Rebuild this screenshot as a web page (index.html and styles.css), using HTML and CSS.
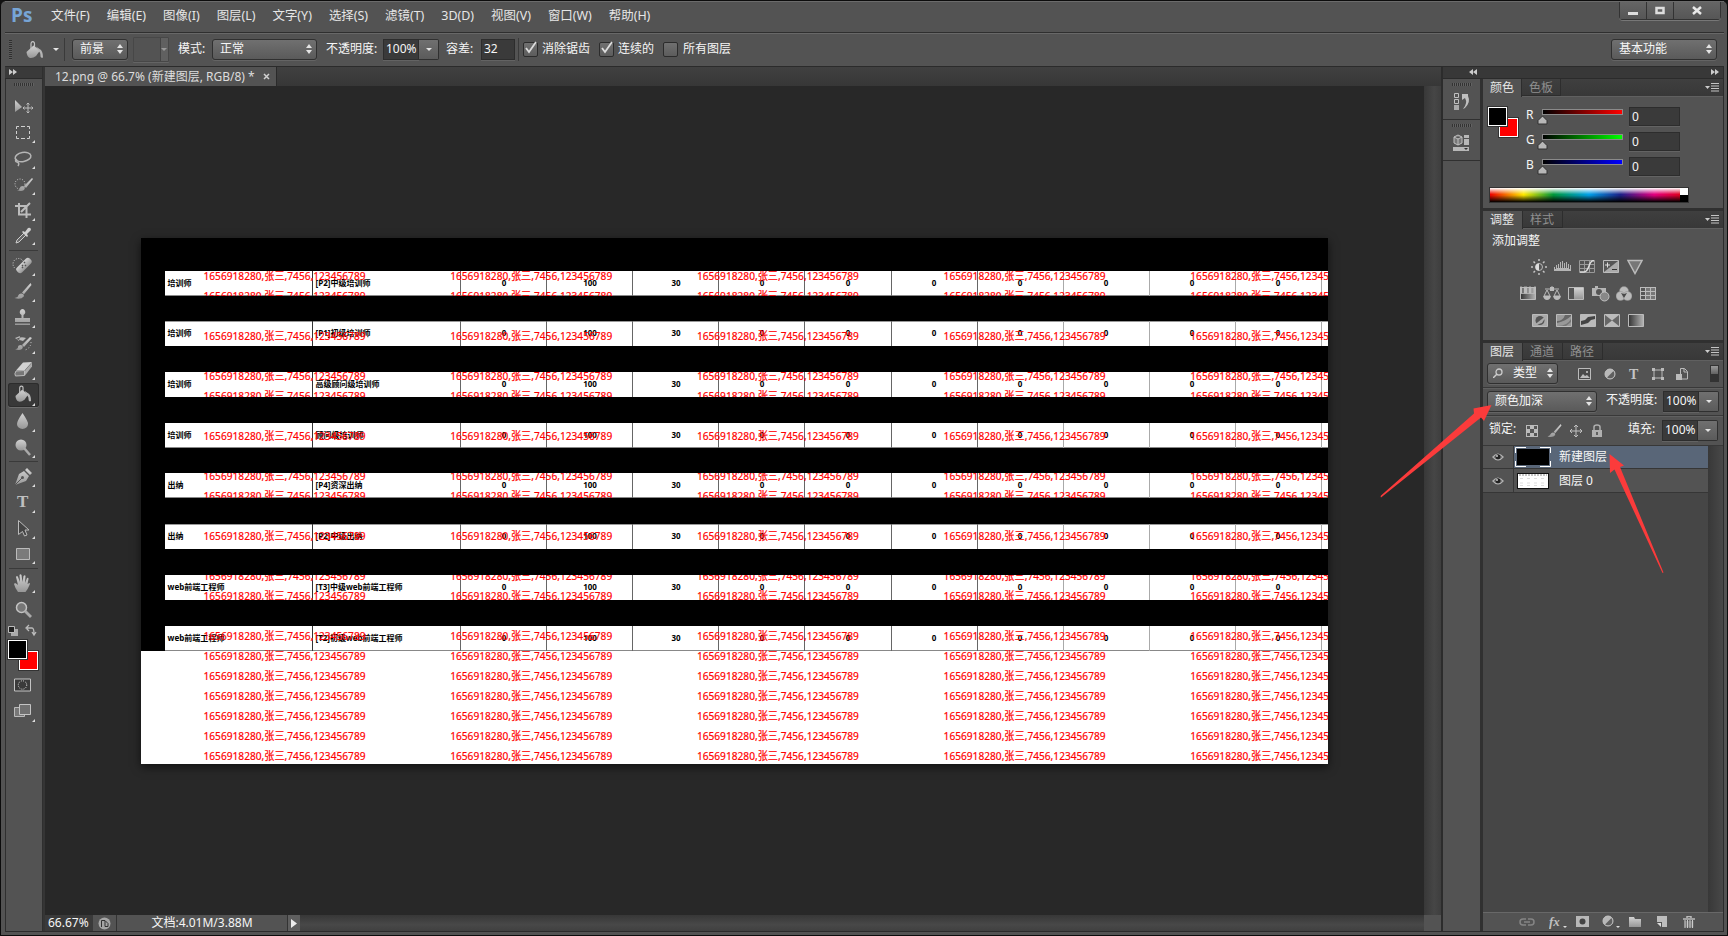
FILE: index.html
```html
<!DOCTYPE html>
<html lang="zh-CN">
<head>
<meta charset="utf-8">
<title>12.png</title>
<link rel="stylesheet" href="styles.css">
</head>
<body>
<svg class="defs" width="0" height="0">
  <defs>
    <linearGradient id="metal" x1="0" y1="0" x2="0" y2="1"><stop offset="0" stop-color="#d2d2d2"/><stop offset="1" stop-color="#979797"/></linearGradient>
    <linearGradient id="fade"><stop offset="0" stop-color="#333"/><stop offset="1" stop-color="#b5b5b5"/></linearGradient>
    <symbol id="bucket" viewBox="0 0 18 18"><path d="M.5 11 7.500 4.500 14 9.500 10 15q-3 2.500-6 2-3-1-3.500-6z" fill="url(#metal)"/><path d="M5 8V3q0-2.300 1.800-2.300T8.500 3v5" fill="none" stroke="#c4c4c4" stroke-width="1.200"/><path d="m10 5.500 3.500 2.500q3.500 1.500 3.500 8.500-2 .8-2.500-1 0-4-1.500-5z" fill="#b4b4b4"/></symbol>
    <symbol id="brush" viewBox="0 0 18 18"><path d="M17 0 8 10l2 2 8-10zM7 11q3 0 3 3-3 4-10 2 4-1 4-3 1-2 3-2z" fill="url(#metal)"/></symbol>
    <symbol id="updown" viewBox="0 0 6 10"><path d="M0 4 3 0l3 4zM0 6h6l-3 4z" fill="#e4e4e4"/></symbol>
    <symbol id="pmenu" viewBox="0 0 14 9"><path d="M0 3h5l-2.500 3z" fill="#ccc"/><path d="M6 .5h8M6 3h8M6 5.500h8M6 8h8" stroke="#c4c4c4"/></symbol>
    <symbol id="half" viewBox="0 0 12 12"><circle cx="6" cy="6" r="5" fill="#b8b8b8"/><path d="M3 9.500 9.500 3A4.500 4.500 0 0 1 3 9.500z" fill="#606060"/><circle cx="6" cy="6" r="5" fill="none" stroke="#c4c4c4"/></symbol>
    <symbol id="eye" viewBox="0 0 12 10"><path d="M0 5q6-7 12 0-6 7-12 0z" fill="#b9b9b9"/><path d="M1.500 5q4-5 9 0-4.500 5-9 0z" fill="#777"/><circle cx="6" cy="4.800" r="2.500" fill="#222"/><circle cx="5" cy="4" r=".9" fill="#ddd"/></symbol>
  </defs>
</svg>
<div class="window">
  <header class="menubar">
    <div class="logo">Ps</div>
    <nav class="menus"><span>文件(F)</span><span>编辑(E)</span><span>图像(I)</span><span>图层(L)</span><span>文字(Y)</span><span>选择(S)</span><span>滤镜(T)</span><span>3D(D)</span><span>视图(V)</span><span>窗口(W)</span><span>帮助(H)</span></nav>
    <div class="winbtns">
      <span class="wb min"><svg width="12" height="12"><path d="M1 7h10v3H1z" fill="#ddd"/></svg></span>
      <span class="wb max"><svg width="12" height="12"><path d="M2.500 3h7v5h-7z" fill="none" stroke="#ddd" stroke-width="2.500"/></svg></span>
      <span class="wb close"><svg width="12" height="12"><path d="m2 2 8 7M10 2 2 9" stroke="#e8e8e8" stroke-width="2.500"/></svg></span>
    </div>
  </header>
  <section class="options">
    <i class="vgrip"></i>
    <svg class="optbucket" width="18" height="18"><use href="#bucket"/></svg>
    <i class="caret"></i><i class="vsep"></i>
    <div class="select w-src">前景<svg width="6" height="10"><use href="#updown"/></svg></div>
    <div class="select off"><i class="caret"></i></div>
    <label class="l-mode">模式:</label>
    <div class="select w-mode">正常<svg width="6" height="10"><use href="#updown"/></svg></div>
    <label class="l-op">不透明度:</label>
    <div class="num">100%</div><div class="drop"><i class="caret"></i></div>
    <label class="l-tol">容差:</label>
    <div class="num tol">32</div>
    <i class="vsep2"></i>
    <span class="check"><svg width="15" height="14"><path d="m3 7 3 4 7-10" fill="none" stroke="#ddd" stroke-width="1.800"/></svg></span><label class="c1">消除锯齿</label>
    <span class="check"><svg width="15" height="14"><path d="m3 7 3 4 7-10" fill="none" stroke="#ddd" stroke-width="1.800"/></svg></span><label class="c2">连续的</label>
    <span class="check"></span><label class="c3">所有图层</label>
    <div class="select w-space">基本功能<svg width="6" height="10"><use href="#updown"/></svg></div>
  </section>
  <main class="main">
    <aside class="tools">
      <div class="toolhead"><svg width="8" height="6"><path d="m0 0 4 3-4 3zM4 0l4 3-4 3z" fill="#ccc"/></svg></div>
      <i class="hgrip"></i>
      <svg class="tool" width="38" height="26"><path d="m10 7 7 7-7 5z" fill="url(#metal)"/><path d="M18 15h10M23 10v10m-1.500-8.500L23 10l1.500 1.500m-3 7L23 20l1.500-1.500M19.500 13.500 18 15l1.500 1.500m7-3L28 15l-1.500 1.500" fill="none" stroke="#bbb"/></svg>
      <svg class="tool" width="38" height="26"><path d="M11.500 10V7.500H14m2 0h4m2 0h2.500V10m0 2v3m0 2v2.500H22m-2 0h-4m-2 0h-2.500V17m0-2v-3" fill="none" stroke="#d0d0d0"/><path class="more" d="M30 21v3h-3z"/></svg>
      <svg class="tool" width="38" height="26"><ellipse cx="18" cy="12" rx="8" ry="4.500" fill="none" stroke="#b5b5b5" stroke-width="1.500" transform="rotate(-10 18 12)"/><path d="M12 14q-3 2 0 3t1 4" fill="none" stroke="#b5b5b5" stroke-width="1.500"/><path class="more" d="M30 21v3h-3z"/></svg>
      <svg class="tool" width="38" height="26"><circle cx="15" cy="13" r="5" fill="none" stroke="#d0d0d0" stroke-dasharray="1 1.500"/><path d="m27 7-8 8 2 2 7-9zm-9 8q3 1 1 4-3 2-7 0 3 0 3-2t3-2z" fill="url(#metal)"/><path class="more" d="M30 21v3h-3z"/></svg>
      <svg class="tool" width="38" height="26"><path d="M10 9h11.500v12M14 6v11.500h12M16 15l9-9" fill="none" stroke="#bcbcbc" stroke-width="2"/><path class="more" d="M30 21v3h-3z"/></svg>
      <svg class="tool" width="38" height="26"><path d="m11 20 1-3 7-7 2 2-7 7z" fill="#666" stroke="#ccc"/><path d="m17 9 1-1 2 1 3-4q3-1 3 2l-4 4 1 2-1 1z" fill="#cfcfcf"/><path class="more" d="M30 19v3h-3z"/></svg>
      <i class="toolsep"></i>
      <svg class="tool" width="38" height="26"><circle cx="13.500" cy="12" r="5.500" fill="none" stroke="#d0d0d0" stroke-dasharray="1 1.500"/><rect x="10" y="10" width="18" height="7" rx="3" transform="rotate(-45 19 13.500)" fill="url(#metal)"/><path d="m17 13 1 1m1-4 1 1m0 2 1 1m-4 1 1 1" stroke="#555" stroke-width="1.500"/><path class="more" d="M30 21v3h-3z"/></svg>
      <svg class="tool" width="38" height="26"><svg x="9" y="5" width="18" height="17"><use href="#brush"/></svg><path class="more" d="M30 21v3h-3z"/></svg>
      <svg class="tool" width="38" height="26"><path d="M16.500 14v-3q-3-2-1-5 2-2 4 0 2 3-1 5v3h6.500v4H10v-4zM10 19.500h15V21H10z" fill="url(#metal)"/><path class="more" d="M30 21v3h-3z"/></svg>
      <svg class="tool" width="38" height="26"><path d="m25 7-8 8 2 2 8-9zm-9 8q3 1 1 4-3 2-7 0 3 0 3-2t3-2z" fill="url(#metal)"/><path d="M11 9q5-3 10-1l-3 3m-8-3 4 3 1-5z" fill="#bbb"/><path d="M26 12q0 6-6 8" fill="none" stroke="#ccc" stroke-dasharray="1 2"/><path class="more" d="M30 21v3h-3z"/></svg>
      <svg class="tool" width="38" height="26"><path d="m11 14.500 7-8 9-.5-7 8z" fill="#d2d2d2"/><path d="m20 14.500 7-8v4l-7 9z" fill="#aaa"/><path d="m11 15 8.500-.5v5l-9 .5q-1.500-2 .5-5z" fill="#777" stroke="#bbb"/><path class="more" d="M30 21v3h-3z"/></svg>
      <svg class="tool selected" width="38" height="26"><svg x="10" y="3" width="17" height="18"><use href="#bucket"/></svg><path class="more" d="M30 21v3h-3z"/></svg>
      <svg class="tool" width="38" height="26"><path d="M17.500 5q6 9 5.500 11a5.500 5 0 0 1-11 0q0-3 5.500-11z" fill="url(#metal)"/><path class="more" d="M30 21v3h-3z"/></svg>
      <svg class="tool" width="38" height="26"><circle cx="16" cy="11" r="5.500" fill="url(#metal)"/><path d="m19 14 6 7" stroke="#aaa" stroke-width="2.500"/><path class="more" d="M30 21v3h-3z"/></svg>
      <i class="toolsep"></i>
      <svg class="tool" width="38" height="26"><path d="m10 22 4-11 5-3 5 5-3 5zM20 7l2-2 5 5-2 2z" fill="url(#metal)"/><path d="m10 22 7-7" stroke="#555"/><circle cx="17.500" cy="14.500" r="1.500" fill="#555"/><path class="more" d="M30 21v3h-3z"/></svg>
      <svg class="tool" width="38" height="26"><text class="ttool" x="12" y="18">T</text><path class="more" d="M30 21v3h-3z"/></svg>
      <svg class="tool" width="38" height="26"><path d="M13.500 5.500v14l4-3 2 4.500 2.500-1-2-5h4z" fill="#444" stroke="#bbb"/><path class="more" d="M30 21v3h-3z"/></svg>
      <svg class="tool" width="38" height="26"><path d="M11.500 7.500h13v11h-13z" fill="#7b7b7b" stroke="#bbb"/><path class="more" d="M30 20v3h-3z"/></svg>
      <i class="toolsep"></i>
      <svg class="tool" width="38" height="26"><path d="M13 22q-3-4-4-8l1-1q2 1 3 2l-2-8q1-2 2 0l2 5-.500-7q1-1.500 2 0l1 7 1-6q1.500-1.500 2 0l-.500 7 2-5q1.500-1 1.500 1l-1 5 2-1q1 0 0 2-2 5-4 7z" fill="url(#metal)"/><path class="more" d="M30 20v3h-3z"/></svg>
      <svg class="tool" width="38" height="26"><circle cx="16.500" cy="11.500" r="5" fill="#777" stroke="#c4c4c4" stroke-width="1.500"/><path d="m20 15 6 6" stroke="#aaa" stroke-width="2.800"/></svg>
      <svg class="mini" width="38" height="17"><path d="M6 7h7v7H6z" fill="#aaa"/><path d="M3.500 4.500h6v6h-6z" fill="#222" stroke="#bbb"/><path d="M22 6h5q2 0 2 6m-2-2 2 3 2-3M24 3l-3 3 3 3" fill="none" stroke="#bbb" stroke-width="1.300"/></svg>
      <div class="swatches"><b class="bg"></b><b class="fg"></b></div>
      <svg class="tool" width="38" height="26"><path d="M9.500 7h16v12h-16z" fill="#3a3a3a" stroke="#c4c4c4"/><circle cx="17.500" cy="13" r="4.200" fill="none" stroke="#ddd" stroke-dasharray="1 1.200"/></svg>
      <svg class="tool" width="38" height="26"><path d="M9.500 9.500h10v9h-10z" fill="#777" stroke="#bbb"/><path d="M14.500 6.500h11v10h-11z" fill="#707070" stroke="#c4c4c4"/><path class="more" d="M30 21v3h-3z"/></svg>
    </aside>
    <section class="doc">
      <div class="tabs"><div class="tab"><span>12.png @ 66.7% (新建图层, RGB/8) *</span><svg width="7" height="7"><path d="m1 1 5 5M6 1 1 6" stroke="#d0d0d0" stroke-width="1.500"/></svg></div></div>
      <div class="work">
        <div class="canvas"><svg id="picture" class="picture" width="1187" height="526" viewBox="141 238 1187 526"></svg></div>
        <i class="vscroll"></i>
      </div>
      <footer class="status">
        <span class="zoom">66.67%</span>
        <span class="sicon"><svg width="13" height="13"><circle cx="6.500" cy="6.500" r="6" fill="#a6a6a6"/><path d="M3.500 10V3.500H7L10 6.500V9.500H7V4" fill="none" stroke="#333"/></svg></span>
        <span class="size">文档:4.01M/3.88M</span>
        <span class="play"><svg width="7" height="9"><path d="m0 0 6 4.500L0 9z" fill="#eee"/></svg></span>
        <i class="hscroll"></i><i class="corner"></i>
      </footer>
    </section>
    <section class="right">
      <div class="righthead"><svg width="8" height="6"><path d="M4 0 0 3l4 3zM8 0 4 3l4 3z" fill="#ccc"/></svg><svg width="8" height="6"><path d="m0 0 4 3-4 3zM4 0l4 3-4 3z" fill="#ccc"/></svg></div>
      <div class="rightbody">
        <div class="dock">
          <div class="dockitem"><i class="hgrip"></i><svg width="18" height="20"><path d="M1.500 1.500h4v4h-4zm0 6h4v4h-4z" fill="none" stroke="#c0c0c0"/><path d="M1 13h5v5H1z" fill="#aaa"/><path d="M9 2h6v2q3 6-3 12l-2 1q5-6 2-11l-3 2z" fill="#c0c0c0"/></svg></div>
          <div class="dockitem"><i class="hgrip"></i><svg width="18" height="20"><path d="m5 2 4 2v6l-4 2-4-2V4zM1 4l4 2 4-2M5 6v6" fill="#777" stroke="#c0c0c0"/><path d="M11 2h5v3h-5zm0 4h5v6h-5zM0 14h16v4H0z" fill="#b8b8b8"/><path d="M11 15h4l-2 2z" fill="#333"/></svg></div>
        </div>
        <div class="panels">
          <div class="ptabs first"><span class="on">颜色</span><span>色板</span><svg width="14" height="9"><use href="#pmenu"/></svg></div>
          <div class="color">
            <div class="colorrow">
              <div class="swatches big"><b class="bg"></b><b class="fg"></b></div>
              <div class="sliders">
                <div class="slider"><span>R</span><div class="track red"><svg width="11" height="9"><path d="M5.500 0 10 4.500V8H1V4.500z" fill="#b8b8b8" stroke="#333"/></svg></div><div class="num">0</div></div>
                <div class="slider"><span>G</span><div class="track green"><svg width="11" height="9"><path d="M5.500 0 10 4.500V8H1V4.500z" fill="#b8b8b8" stroke="#333"/></svg></div><div class="num">0</div></div>
                <div class="slider"><span>B</span><div class="track blue"><svg width="11" height="9"><path d="M5.500 0 10 4.500V8H1V4.500z" fill="#b8b8b8" stroke="#333"/></svg></div><div class="num">0</div></div>
              </div>
            </div>
            <div class="spectrum"><i></i><b></b></div>
          </div>
          <div class="ptabs"><span class="on">调整</span><span>样式</span><svg width="14" height="9"><use href="#pmenu"/></svg></div>
          <div class="adjust">
            <p>添加调整</p>
            <div class="adjrow one">
              <svg width="16" height="16"><circle cx="8" cy="8" r="3.500" fill="#555" stroke="#bbb"/><path d="M8 4.500a3.500 3.500 0 0 0 0 7z" fill="#ddd"/><path d="M8 0v2m0 12v2M0 8h2m12 0h2M2.500 2.500l1.500 1.500m8 8 1.500 1.500m0-11L12 4m-8 8-1.500 1.500" stroke="#c4c4c4" stroke-width="1.500"/></svg>
              <svg width="18" height="16"><path d="M0 12V8h1v2h1V6h1v3h1V5h1v4h1V3h1v6h1V2h1v7h1V4h1v5h1V3h1v6h1V5h1v5h1V6h1v6z" fill="#b5b5b5"/></svg>
              <svg width="16" height="16"><path d="M.5 1.500h15v12H.5zM0 5.500h16M0 9.500h16M5.500 1v12M10.500 1v12" fill="none" stroke="#999"/><path d="M1 13h4q3 0 5-6t5-5" fill="none" stroke="#ddd" stroke-width="1.500"/></svg>
              <svg width="16" height="16"><path d="M.5 1.500h15v12H.5z" fill="#aaa" stroke="#bbb"/><path d="M1 2h14L1 13z" fill="#555"/><path d="M2 6h5M4.500 3.500v5" stroke="#ddd"/><path d="M9 10.500h5" stroke="#333"/></svg>
              <svg width="16" height="16"><path d="M1 1.500h14L8 14.500z" fill="#777" stroke="#bbb" stroke-width="1.500"/></svg>
            </div>
            <div class="adjrow two">
              <svg width="16" height="16"><path d="M.5 1.500h15v12H.5z" fill="url(#fade)" stroke="#bbb"/><path d="M0 1h2v6H0zm4 0h3v6H4zm5 0h2v6H9zm5 0h2v6h-2zM0 7.500h16" fill="#bbb" stroke="#bbb" stroke-width=".8"/></svg>
              <svg width="18" height="16"><path d="M2 3h14M9 0v5M4 4l-3 6h6L4 4zm10 0-3 6h6l-3-6z" fill="none" stroke="#bbb"/><path d="M0 10h8q-1 4-4 4t-4-4zm10 0h8q-1 4-4 4t-4-4zM7 1h4v4H7z" fill="#bbb"/></svg>
              <svg width="16" height="16"><path d="M.5 1.500h15v12H.5z" fill="#555" stroke="#bbb"/><path d="M6 2h9v11H6z" fill="url(#metal)"/></svg>
              <svg width="18" height="16"><path d="M0 2h3V0h3v2h8v8H0z" fill="#b5b5b5"/><circle cx="7" cy="6" r="3" fill="#555"/><circle cx="12.500" cy="10.500" r="4.500" fill="#888" stroke="#c0c0c0"/></svg>
              <svg width="16" height="16"><g fill="#bbb" stroke="#888" stroke-width=".5"><circle cx="8" cy="5" r="4.500"/><circle cx="4.500" cy="10" r="4.500"/><circle cx="11.500" cy="10" r="4.500"/></g><path d="m5 7 3 1 3-1-3 5z" fill="#4a4a4a"/></svg>
              <svg width="16" height="16"><path d="M0 1h16v13H0z" fill="#bbb"/><path d="M1 2h4v3H1zm0 4h4v3H1zm0 4h4v3H1z" fill="#555"/><path d="M6 2h4v3H6zm5 0h4v3h-4zM6 6h4v3H6zm5 0h4v3h-4zm-5 4h4v3H6zm5 0h4v3h-4z" fill="#777"/></svg>
            </div>
            <div class="adjrow three">
              <svg width="16" height="16"><path d="M.5 1.500h15v12H.5z" fill="#aaa" stroke="#bbb"/><circle cx="8" cy="7.500" r="4.500" fill="#555"/><path d="M1 13 15 2l-5 8z" fill="#aaa"/></svg>
              <svg width="16" height="16"><path d="M.5 1.500h15v12H.5z" fill="#999" stroke="#bbb"/><path d="M1 8q6 0 8-6h6v1q-5 5-14 7z" fill="#666"/><path d="M2 13q9 0 13-7v3l-5 4z" fill="#777"/></svg>
              <svg width="16" height="16"><path d="M.5 1.500h15v12H.5z" fill="#bbb" stroke="#bbb"/><path d="m1 8 4-1 3-3 7-1v3l-4 1-3 3-7 2z" fill="#444"/></svg>
              <svg width="16" height="16"><path d="M.5 1.500h15v12H.5z" fill="#666" stroke="#bbb"/><path d="m1 2 7 5.500L15 2zm0 11 7-5.500 7 5.500z" fill="#bbb"/></svg>
              <svg width="16" height="16"><path d="M.5 1.500h15v12H.5z" fill="url(#fade)" stroke="#bbb"/></svg>
            </div>
          </div>
          <div class="ptabs"><span class="on">图层</span><span>通道</span><span>路径</span><svg width="14" height="9"><use href="#pmenu"/></svg></div>
          <div class="filter">
            <div class="select w-type"><svg class="mag" width="10" height="10"><circle cx="6" cy="4" r="3" fill="none" stroke="#ccc" stroke-width="1.300"/><path d="M4 6 0 10" stroke="#ccc" stroke-width="1.500"/></svg>类型<svg width="6" height="10"><use href="#updown"/></svg></div>
            <div class="ficons">
              <svg width="14" height="12"><path d="M.5.5h12v11H.5z" fill="#4a4a4a" stroke="#bbb"/><path d="m2 10 3-4 2 2 2-1 3 3z" fill="#bbb"/><circle cx="9" cy="4" r="1" fill="#ccc"/></svg>
              <svg width="12" height="12"><use href="#half"/></svg>
              <svg width="12" height="12"><text class="tfilter" x="1" y="11">T</text></svg>
              <svg width="12" height="12"><path d="M2 2h8v8H2z" fill="none" stroke="#bbb"/><path d="M0 0h3v3H0zm9 0h3v3H9zM0 9h3v3H0zm9 0h3v3H9z" fill="#bbb"/></svg>
              <svg width="12" height="12"><path d="M4.500 8V.5h4l3 3V11H6M8 1v3h3" fill="none" stroke="#bbb"/><path d="M0 6h6v6H0z" fill="#bbb"/></svg>
            </div>
            <i class="toggle"></i>
          </div>
          <div class="blend"><div class="select w-blend">颜色加深<svg width="6" height="10"><use href="#updown"/></svg></div><label>不透明度:</label><div class="num">100%</div><div class="drop"><i class="caret"></i></div></div>
          <div class="lock"><label>锁定:</label>
            <svg class="chk" width="12" height="12"><path d="M0 0h12v12H0z" fill="#bbb"/><path d="M1 1h3v3H1zm7 0h3v3H8zM4 4h4v4H4zM1 8h3v3H1zm7 0h3v3H8z" fill="#555"/></svg>
            <svg width="17" height="14"><use href="#brush"/></svg>
            <svg width="14" height="14"><path d="M1 7h12M7 1v12M5 3l2-2 2 2m-4 8 2 2 2-2M3 5 1 7l2 2m8-4 2 2-2 2" fill="none" stroke="#c0c0c0"/></svg>
            <svg width="12" height="13"><path d="M1 6h10v7H1z" fill="#b0b0b0"/><path d="M3 6V3q0-2 3-2t3 2v3" fill="none" stroke="#b0b0b0" stroke-width="1.500"/><path d="M6 8v3" stroke="#444" stroke-width="1.500"/></svg>
            <label class="fill">填充:</label><div class="num">100%</div><div class="drop"><i class="caret"></i></div></div>
          <div class="layers">
            <div class="list">
              <div class="layer sel"><span class="vis"><svg width="12" height="10"><use href="#eye"/></svg></span><span class="thumb black"><svg width="36" height="20"><path d="M.5 6V.5H11M25 .5h10.500V6m0 8v5.500H25m-14 0H.5V14" fill="none" stroke="#fff"/></svg></span><span>新建图层</span></div>
              <div class="layer"><span class="vis"><svg width="12" height="10"><use href="#eye"/></svg></span><span class="thumb white"><svg width="30" height="14"><path d="M1 1h28" stroke="#888" stroke-dasharray="2 1"/><path d="M2 4.500h26M2 9h26M2 11.500h26" stroke="#ddd" stroke-dasharray="3 4"/></svg></span><span>图层 0</span></div>
            </div>
            <i class="lscroll"></i>
          </div>
          <div class="lfoot">
            <svg width="16" height="12"><path d="M7 3H4a3 3 0 0 0 0 6h3M9 3h3a3 3 0 0 1 0 6H9M5 6h6" fill="none" stroke="#858585" stroke-width="1.500"/></svg>
            <svg width="18" height="14"><text class="fx" x="0" y="11">fx</text><path d="M14 11h4l-2 2z" fill="#ddd"/></svg>
            <svg width="14" height="12"><path d="M0 0h13v11H0z" fill="#b8b8b8"/><circle cx="6.500" cy="5.500" r="3" fill="#444"/></svg>
            <svg width="18" height="14"><svg width="12" height="12"><use href="#half"/></svg><path d="M14 11h4l-2 2z" fill="#ddd"/></svg>
            <svg width="13" height="12"><path d="M0 1h5l1 2h6v8H0z" fill="url(#metal)"/></svg>
            <svg width="12" height="12"><path d="M1 0h10v11H6V6H1z" fill="#bdbdbd"/><path d="M1 7h4v4z" fill="#ddd"/></svg>
            <svg width="12" height="12"><path d="M0 3h12M4 2V.500h4V2" fill="none" stroke="#bbb" stroke-width="1.500"/><path d="M1.500 5h9v6.500h-9z" fill="#777"/><path d="M2 4v8m2.500-8v8M7 4v8m2.500-8v8" stroke="#ccc"/></svg>
          </div>
        </div>
      </div>
    </section>
  </main>
</div>
<svg class="arrows" width="300" height="190" viewBox="1375 395 300 190"><path d="m1491.500 405-7.500 16-3-3.500-100 80q-.7-1 0-2l93-82-.5-5zM1609.500 454l14.500 11.500-4 1.500 43.500 105.500-1 .5-48-103.500-4.500 3.500z" fill="#fb3b3b"/></svg>
<script src="picture.js"></script>
</body>
</html>
```
FILE: styles.css
```css
* { box-sizing: border-box; }
body { margin: 0; background: #111; font: 12px/16px "Noto Sans", "Noto Sans CJK SC", sans-serif; color: #f6f6f6; overflow: hidden; }
svg { display: block; flex: none; }
i, b { display: block; flex: none; }
label, span { white-space: nowrap; }
.defs { position: absolute; }
.window { width: 1728px; height: 936px; border: 1px solid #0c0c0c; border-radius: 6px 6px 0 0; background: #535353; display: flex; flex-direction: column; padding: 0 3px 3px 4px; }

.menubar { height: 31px; display: flex; align-items: flex-start; border-top: 1px solid #6b6b6b; }
.logo { width: 46px; padding-left: 6px; font: bold 19px/26px "Open Sans", sans-serif; color: #77a5d6; }
.menus { display: flex; gap: 17px; padding-top: 6px; font-size: 12.45px; color: #e6e6e6; }
.winbtns { display: flex; margin-left: auto; margin-right: 3px; height: 18px; border: 1px solid #333; border-top: 0; border-radius: 0 0 4px 4px; box-shadow: 0 1px #777; }
.wb { display: flex; justify-content: center; align-items: center; background: linear-gradient(#656565, #565656); }
.min { width: 27px; border-right: 1px solid #333; }
.max { width: 27px; border-right: 1px solid #333; }
.close { width: 46px; }

.options { height: 34px; border-top: 1px solid #2f2f2f; box-shadow: inset 0 1px #686868; display: flex; align-items: center; padding: 1px 7px 1px 4px; }
.vgrip { width: 3px; height: 20px; background: repeating-linear-gradient(#2f2f2f 0 1px, #5c5c5c 1px 2px); }
.optbucket { margin: 0 9px 0 14px; }
.caret { width: 0; height: 0; border: 3px solid transparent; border-top-color: #e4e4e4; border-bottom: 0; }
.vsep { width: 1px; height: 23px; background: #3a3a3a; margin: 0 7px 0 5px; }
.select { height: 21px; flex: none; display: flex; align-items: center; justify-content: space-between; padding: 0 4px 1px 7px; border: 1px solid #303030; border-radius: 3px; background: linear-gradient(#707070, #5a5a5a); box-shadow: 0 1px #646464; white-space: nowrap; }
.w-src { width: 56px; }
.off { width: 36px; height: 25px; margin: 0 9px 0 5px; border-color: #474747; border-radius: 1px; background: linear-gradient(90deg, #535353 26px, #444 26px 27px, #606060 27px); justify-content: flex-end; padding-right: 1px; }
.off .caret { border-top-color: #999; }
.options label { margin-top: -2px; }
.options .l-mode { width: 34px; }
.w-mode { width: 105px; }
.options .l-op { width: 57px; margin-left: 9px; }
.num { width: 36px; height: 21px; flex: none; background: #3a3a3a; border: 1px solid #2d2d2d; box-shadow: 0 1px #636363; padding-left: 2px; line-height: 18px; }
.drop { width: 20px; height: 21px; flex: none; display: flex; align-items: center; justify-content: center; border: 1px solid #303030; border-left: 0; border-radius: 0 2px 2px 0; background: linear-gradient(#707070, #5b5b5b); }
.options .l-tol { width: 35px; margin-left: 7px; }
.tol { width: 34px; }
.vsep2 { width: 1px; height: 23px; background: #3a3a3a; margin: 0 4px 0 3px; }
.check { width: 15px; height: 15px; flex: none; border: 1px solid #2c2c2c; border-radius: 2px; background: linear-gradient(#707070, #5c5c5c); }
.check svg { margin: -2px 0 0 -1px; }
.c1 { width: 61px; padding-left: 4px; }
.c2 { width: 49px; padding-left: 4px; }
.c3 { padding-left: 5px; }
.w-space { width: 106px; margin-left: auto; }

.main { flex: 1; min-height: 0; display: flex; border: 1px solid #2b2b2b; border-left-color: #333; }
.tools { width: 38px; flex: none; display: flex; flex-direction: column; border-right: 1px solid #2f2f2f; margin-left: -1px; box-shadow: inset 1px 0 #2f2f2f; }
.toolhead { height: 12px; background: #3a3a3a; border-bottom: 1px solid #2b2b2b; padding: 2px 4px; margin-bottom: 4px; }
.hgrip { width: 20px; height: 3px; background: repeating-linear-gradient(90deg, #333 0 1px, #626262 1px 2px); }
.tools .hgrip { margin: 0 0 7px 9px; }
.tool { width: 37px; height: 26px; }
.more { fill: #ddd; }
.selected { background: #383838; border-radius: 3px; width: 31px; margin-left: 3px; height: 24px; margin-top: 1px; margin-bottom: 1px; box-shadow: 0 0 0 1px #2c2c2c inset, 0 1px #6c6c6c; }
.selected > * { transform: translate(-3px, -1px); }
.toolsep { width: 29px; height: 1px; margin: 1px 0 1px 4px; background: #3a3a3a; }
.ttool { font: bold 17px "Liberation Serif", serif; fill: #c0c0c0; }
.tfilter { font: bold 14px "Liberation Serif", serif; fill: #c4c4c4; }
.fx { font: italic bold 13px "Liberation Serif", serif; fill: #c0c0c0; }
.swatches { width: 30px; height: 30px; display: grid; margin: 1px 0 2px 3px; }
.swatches b { grid-area: 1 / 1; width: 19px; height: 19px; border: 1px solid #fff; outline: 1px solid #333; }
.fg { background: #000; margin: 0; }
.bg { background: #f00; align-self: end; justify-self: end; }

.doc { flex: 1; min-width: 0; display: flex; flex-direction: column; border-left: 2px solid #353535; }
.tabs { height: 19px; background: linear-gradient(#404040, #373737); display: flex; }
.tab { width: 232px; background: #535353; border-right: 1px solid #2a2a2a; display: flex; align-items: center; justify-content: space-between; padding: 0 6px 0 10px; color: #ddd; line-height: 20px; }
.tab span { font-size: 12px; padding-top: 1px; }
.work { flex: 1; min-height: 0; display: flex; background: #282828; }
.canvas { flex: 1; min-width: 0; padding: 152px 0 0 96px; }
.picture { background: #fff; box-shadow: 0 3px 9px #0009; }
.vscroll { width: 17px; background: linear-gradient(90deg, #383838, #464646 60%, #3e3e3e); }
.status { height: 16px; display: flex; line-height: 15px; background: #444; }
.zoom { width: 48px; padding-left: 3px; background: #3a3a3a; }
.sicon { width: 24px; background: #535353; border-right: 1px solid #333; display: flex; align-items: center; justify-content: center; }
.size { width: 171px; background: #535353; border-right: 1px solid #333; text-align: center; }
.play { width: 12px; background: #5f5f5f; display: flex; align-items: center; justify-content: center; }
.hscroll { flex: 1; background: linear-gradient(#373737, #484848 60%, #404040); }
.corner { width: 17px; background: #535353; }
.mark { font: 11px "Noto Sans", "Noto Sans CJK SC", sans-serif; fill: #f00; stroke: #f00; stroke-width: .2px; }
.cell { font: bold 8px "Noto Sans", "Noto Sans CJK SC", sans-serif; fill: #000; }
.mid { text-anchor: middle; }

.right { width: 282px; flex: none; display: flex; flex-direction: column; border-left: 2px solid #2c2c2c; }
.righthead { height: 12px; background: #383838; border-bottom: 1px solid #2b2b2b; display: flex; justify-content: space-between; padding: 2px 4px 0 26px; }
.rightbody { flex: 1; min-height: 0; display: flex; }
.dock { width: 40px; flex: none; border-right: 3px solid #303030; }
.dockitem { height: 41px; border-bottom: 1px solid #303030; display: flex; flex-direction: column; align-items: center; padding: 4px 0 0 1px; gap: 6px; }
.panels { width: 240px; flex: none; display: flex; flex-direction: column; }
.ptabs { height: 18px; flex: none; display: flex; background: linear-gradient(#3f3f3f, #383838); border-bottom: 1px solid #606060; }
.ptabs span { width: 40px; padding-left: 7px; border-right: 1px solid #2d2d2d; border-bottom: 1px solid #2d2d2d; color: #8f8f8f; line-height: 17px; }
.first span { width: 39px; }
.ptabs .on { background: #535353; color: #e6e6e6; height: 18px; border-bottom: 0; }
.ptabs svg { margin: 4px 4px 0 auto; }
.color { height: 114px; flex: none; border-bottom: 3px solid #303030; padding: 10px 0 0 6px; }
.colorrow { display: flex; height: 80px; }
.big { margin: 0 0 0 -1px; }
.sliders { display: flex; flex-direction: column; gap: 6px; margin-left: 8px; }
.slider { height: 19px; display: flex; }
.slider span { width: 16px; line-height: 15px; }
.track { width: 81px; height: 6px; border: 1px solid #8a8a8a; margin: 2px 6px 0 0; }
.track svg { margin: 6px 0 0 -6px; }
.red { background: linear-gradient(90deg, #000, #f00); }
.green { background: linear-gradient(90deg, #000, #0f0); }
.blue { background: linear-gradient(90deg, #000, #00f); }
.slider .num { width: 51px; height: 19px; }
.spectrum { width: 200px; height: 16px; border: 1px solid #333; display: grid; grid-template: 1fr 1fr / 1fr 8px; background: linear-gradient(#fff, #fff0 45%, #0000 50%, #000), linear-gradient(90deg, #e00, #ffe900 17%, #00983a 32%, #00a0e9 50%, #1d2088 66%, #e4007f 83%, #d00); }
.spectrum i { grid-area: 1 / 2; background: #fff; }
.spectrum b { grid-area: 2 / 2; background: #000; }
.adjust { height: 114px; flex: none; border-bottom: 3px solid #303030; padding-top: 4px; }
.adjust p { margin: 0 0 10px 9px; }
.adjrow { display: flex; margin-bottom: 11px; gap: 8px; }
.one { padding-left: 48px; }
.two { padding-left: 37px; }
.three { padding-left: 49px; }
.one svg:nth-child(2), .two svg:nth-child(2) { margin: 0 -1px; }
.two svg:nth-child(4) { margin-right: -2px; }
.filter { height: 27px; flex: none; display: flex; padding: 2px 4px 0 4px; border-bottom: 1px solid #393939; }
.w-type { width: 71px; }
.w-type .mag { margin-left: -2px; }
.ficons { display: flex; gap: 12px; margin: 5px 0 0 20px; }
.toggle { width: 9px; height: 17px; margin: 2px 0 0 auto; border: 1px solid #333; background: linear-gradient(#999, #666 50%, #333 50%); }
.blend { height: 28px; flex: none; display: flex; padding: 2px 0 0 4px; border-top: 1px solid #606060; border-bottom: 1px solid #393939; }
.w-blend { width: 110px; }
.blend label { width: 57px; margin-left: 9px; line-height: 18px; }
.lock { height: 29px; flex: none; display: flex; align-items: center; padding: 0 0 1px 6px; border-top: 1px solid #606060; gap: 8px; }
.lock label { width: 29px; margin-top: -3px; }
.lock svg:nth-of-type(3) { margin-left: -2px; }
.lock .fill { width: 26px; margin-left: 17px; }
.lock .drop { margin-left: -8px; }
.layers { flex: 1; min-height: 0; display: flex; border-top: 1px solid #383838; }
.list { flex: 1; background: #464646; }
.layer { height: 24px; display: flex; align-items: center; background: #535353; border-bottom: 1px solid #363636; }
.sel { background: #596678; height: 23px; }
.vis { width: 31px; height: 100%; display: flex; align-items: center; justify-content: center; background: #535353; border-right: 1px solid #383838; }
.thumb { margin: 0 8px 0 1px; width: 36px; }
.black { background: linear-gradient(#000, #000) center / 32px 16px no-repeat; }
.white svg { background: #fff; outline: 1px solid #111; margin: 0 3px; }
.lscroll { width: 15px; background: linear-gradient(90deg, #383838, #484848); }
.lfoot { height: 19px; flex: none; display: flex; align-items: center; padding-left: 36px; gap: 12px; border-top: 1px solid #686868; }
.lfoot svg:nth-child(1) { margin-right: 2px; }
.lfoot svg:nth-child(2), .lfoot svg:nth-child(4) { margin-right: -3px; }
.lfoot svg:nth-child(5) { margin-right: 2px; }
.lfoot svg:nth-child(6) { margin-right: 3px; }
.arrows { position: absolute; left: 1375px; top: 395px; }
```
FILE: picture.js
```js
// Table picture: white bands on black, with a tiled red watermark.
const NS = 'http://www.w3.org/2000/svg';
const picture = document.getElementById('picture');

function add(name, attrs, text, parent = picture) {
  const node = document.createElementNS(NS, name);
  for (const key in attrs) node.setAttribute(key, attrs[key]);
  if (text) node.textContent = text;
  parent.appendChild(node);
  return node;
}

const rows = [
  ['培训师', '[P2]中级培训师', 55],
  ['培训师', '[P1]初级培训师', 55],
  ['培训师', '高级顾问级培训师', 64],
  ['培训师', '顾问级培训师', 48],
  ['出纳', '[P4]资深出纳', 47],
  ['出纳', '[P2]中级出纳', 47],
  ['web前端工程师', '[T3]中级web前端工程师', 87],
  ['web前端工程师', '[T2]初级web前端工程师', 87],
];
const tops = [271, 321, 372, 423, 473, 524, 575, 626];
const numbers = [0, 100, 30, 0, 0, 0, 0, 0, 0, 0];

add('rect', { x: 141, y: 238, width: 1187, height: 413, fill: '#000' });
const clip = add('clipPath', { id: 'white' });
add('rect', { x: 141, y: 651, width: 1187, height: 113 }, '', clip);

rows.forEach(([job, level, width], r) => {
  const y = tops[r];
  add('rect', { x: 165, y, width: 1163, height: 25, fill: '#fff' });
  add('rect', { x: 165, y, width: 1163, height: 25 }, '', clip);
  if (r === 1 || r === 5) add('rect', { x: 165, y, width: 1163, height: 1, fill: '#999' });
  if (r === 0 || r === 3 || r === 4 || r === 7) add('rect', { x: 165, y: y + 24, width: 1163, height: 1, fill: '#888' });
  add('rect', { x: 312, y, width: 1, height: 25, fill: '#333' });
  for (let c = 0; c < 11; c++) {
    add('rect', { x: Math.round(460 + c * 86.1), y, width: 1, height: 25, fill: c < 7 ? '#666' : '#aaa' });
  }
  const base = y + 15.2;
  add('text', { class: 'cell', x: 167.5, y: base, textLength: job.length > 3 ? 57 : job.length * 8, lengthAdjust: 'spacingAndGlyphs' }, job);
  add('text', { class: 'cell', x: 315.5, y: base, textLength: width, lengthAdjust: 'spacingAndGlyphs' }, level);
  numbers.forEach((n, c) => add('text', { class: 'cell mid', x: 504 + c * 86, y: base }, String(n)));
});

const marks = add('g', { 'clip-path': 'url(#white)' });
const lines = [276, 296, 336, 376, 396, 436, 476, 496, 536, 576, 596, 636, 656, 676, 696, 716, 736, 756];
lines.forEach((y) => {
  for (let c = 0; c < 5; c++) {
    add('text', { class: 'mark', x: 203.5 + c * 246.7, y: y + 3.6, textLength: 162, lengthAdjust: 'spacingAndGlyphs' }, '1656918280,张三,7456,123456789', marks);
  }
});
```
